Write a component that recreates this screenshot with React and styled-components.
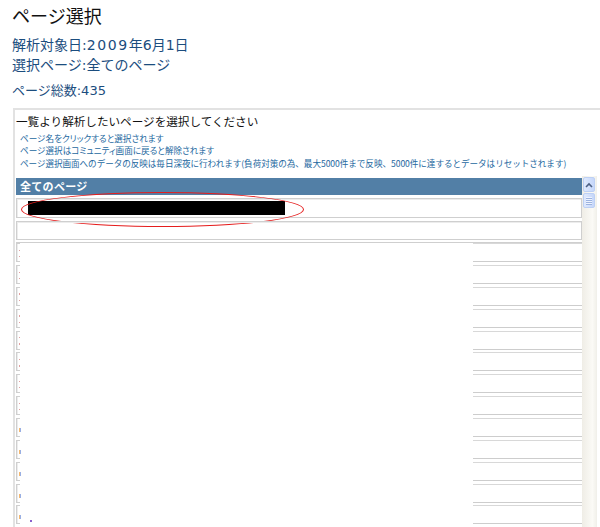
import React from "react";
import styled, { createGlobalStyle } from "styled-components";

const Global = createGlobalStyle`
  html, body { margin: 0; padding: 0; background: #fff; overflow: hidden; }
  body { font-family: "Noto Sans CJK JP", "Noto Sans", sans-serif; }
`;

const Page = styled.div`
  width: 600px;
  height: 527px;
  padding-left: 12px;
  box-sizing: border-box;
  overflow: hidden;
`;

const Title = styled.h1`
  margin: 0;
  padding-top: 5px;
  font-size: 18px;
  line-height: 21px;
  font-weight: normal;
  color: #111;
`;

const Info = styled.div`
  font-family: "DejaVu Sans", "Noto Sans CJK JP", sans-serif;
  font-size: ${(p) => (p.$small ? "13px" : "14px")};
  line-height: ${(p) => (p.$small ? "16px" : "20px")};
  margin-top: ${(p) => p.$mt || 0}px;
  color: #1b4d7e;
`;

const Num = styled.span`
  letter-spacing: 1.6px;
`;

const Panel = styled.section`
  margin-top: 9px;
  margin-left: 1px;
  border-top: 2px solid #e2e2e2;
  border-left: 2px solid #e2e2e2;
  padding: 3px 0 0 1px;
`;

const PanelHeading = styled.div`
  font-size: 11.6px;
  line-height: 16px;
  color: #111;
`;

const Notes = styled.ul`
  list-style: none;
  margin: 3px 0 0;
  padding: 0 0 0 4px;
`;

const Note = styled.li`
  font-size: 8.6px;
  line-height: 12.4px;
  color: #2468a0;
  white-space: nowrap;
  letter-spacing: ${(p) => (p.$palt ? "0" : "-0.06px")};
  font-feature-settings: ${(p) => (p.$palt ? '"palt"' : "normal")};
`;

const ScrollArea = styled.div`
  display: flex;
  margin-top: 7px;
`;

const List = styled.div`
  width: 566px;
  padding-top: 2px;
`;

const ListHeader = styled.div`
  height: 17px;
  background: #527fa6;
  color: #fff;
  font-weight: bold;
  font-size: 11px;
  line-height: 17px;
  padding-left: 4px;
  letter-spacing: 0.3px;
`;

const SelectRow = styled.div`
  position: relative;
  height: ${(p) => p.$h}px;
  margin-top: 3px;
  box-sizing: border-box;
  border: 1px solid #cfcfcf;
  box-shadow: inset 1px 1px 0 #ececec;
  display: flex;
  align-items: center;
  padding-left: 11px;
`;

const Redacted = styled.div`
  width: 257px;
  height: 14.5px;
  background: #000;
`;

const Ellipse = styled.div`
  position: absolute;
  left: 4px;
  top: -7px;
  width: 283px;
  height: 35px;
  box-sizing: border-box;
  border: 1px solid #e51d1d;
  border-radius: 50%;
  pointer-events: none;
`;

const PageList = styled.div`
  margin-top: 2px;
  border-top: 1px solid #cfcfcf;
  display: flex;
  flex-direction: column;
  gap: 2.85px;
`;

const PageRow = styled.div`
  display: flex;
  height: 19px;
`;

const LeftCap = styled.div`
  width: 4px;
  box-sizing: border-box;
  border: 1px solid #cfcfcf;
  border-right: none;
  box-shadow: inset 1px 0 0 #ececec;
  display: flex;
  flex-direction: column;
  align-items: flex-start;
  padding: ${(p) => (p.$mark ? "9px" : "5.5px")} 0 0 2px;
  gap: 5px;
`;

const Dot = styled.span`
  display: block;
  width: 1px;
  height: 1.3px;
  background: #e0a0a0;
`;

const Mark = styled.span`
  display: block;
  width: 2px;
  height: 4px;
  background: linear-gradient(to right, #f4b870 50%, #9ab0e4 50%);
`;

const Spacer = styled.div`
  flex: 1;
  display: flex;
  align-items: flex-end;
  padding: 0 0 2px 10px;
`;

const Speck = styled.span`
  width: 2px;
  height: 2px;
  background: #8a60cc;
`;

const RightCap = styled.div`
  width: 109px;
  box-sizing: border-box;
  border-top: 1px solid #d8d8d8;
  border-bottom: 1px solid #cdcdcd;
`;

const ScrollBar = styled.div`
  width: 15px;
  height: 360px;
  box-sizing: border-box;
  padding: 1px 2px 0 1px;
  background: linear-gradient(to right, #efede6, #fbfaf6 70%, #f0efe9);
  display: flex;
  flex-direction: column;
  gap: 1px;
`;

const SBButton = styled.div`
  height: 15px;
  box-sizing: border-box;
  border: 1px solid #bdd0f4;
  border-radius: 2px;
  background: linear-gradient(to right, #dfe9fd, #c6d7fa);
  display: flex;
  align-items: center;
  justify-content: center;
  flex-direction: column;
  gap: 1px;
`;

const Grip = styled.span`
  display: block;
  width: 6px;
  height: 1px;
  background: #eef3fe;
  box-shadow: 0 1px 0 #9cb3e0;
`;

const pages = Array.from({ length: 13 }, (_, i) => ({
  mark: i >= 8,
  speck: i === 12,
}));

export default function App() {
  return (
    <Page>
      <Global />
      <Title>ページ選択</Title>
      <Info $mt={9}>
        解析対象日:<Num>2009</Num>年6月1日
      </Info>
      <Info>選択ページ:全てのページ</Info>
      <Info $small $mt={8}>ページ総数:435</Info>
      <Panel>
        <PanelHeading>一覧より解析したいページを選択してください</PanelHeading>
        <Notes>
          <Note $palt>ページ名をクリックすると選択されます</Note>
          <Note $palt>ページ選択はコミュニティ画面に戻ると解除されます</Note>
          <Note>
            ページ選択画面へのデータの反映は毎日深夜に行われます(負荷対策の為、最大5000件まで反映、5000件に達するとデータはリセットされます)
          </Note>
        </Notes>
        <ScrollArea>
          <List>
            <ListHeader>全てのページ</ListHeader>
            <SelectRow $h={20}>
              <Redacted />
              <Ellipse />
            </SelectRow>
            <SelectRow $h={19} />
            <PageList>
              {pages.map((p, i) => (
                <PageRow key={i}>
                  <LeftCap $mark={p.mark}>
                    {p.mark ? (
                      <Mark />
                    ) : (
                      <>
                        <Dot />
                        <Dot />
                      </>
                    )}
                  </LeftCap>
                  <Spacer>{p.speck && <Speck />}</Spacer>
                  <RightCap />
                </PageRow>
              ))}
            </PageList>
          </List>
          <ScrollBar>
            <SBButton>
              <svg width="8" height="6" viewBox="0 0 8 6">
                <polyline
                  points="1,5 4,2 7,5"
                  fill="none"
                  stroke="#4d6185"
                  strokeWidth="1.6"
                />
              </svg>
            </SBButton>
            <SBButton>
              <Grip />
              <Grip />
              <Grip />
              <Grip />
            </SBButton>
          </ScrollBar>
        </ScrollArea>
      </Panel>
    </Page>
  );
}
